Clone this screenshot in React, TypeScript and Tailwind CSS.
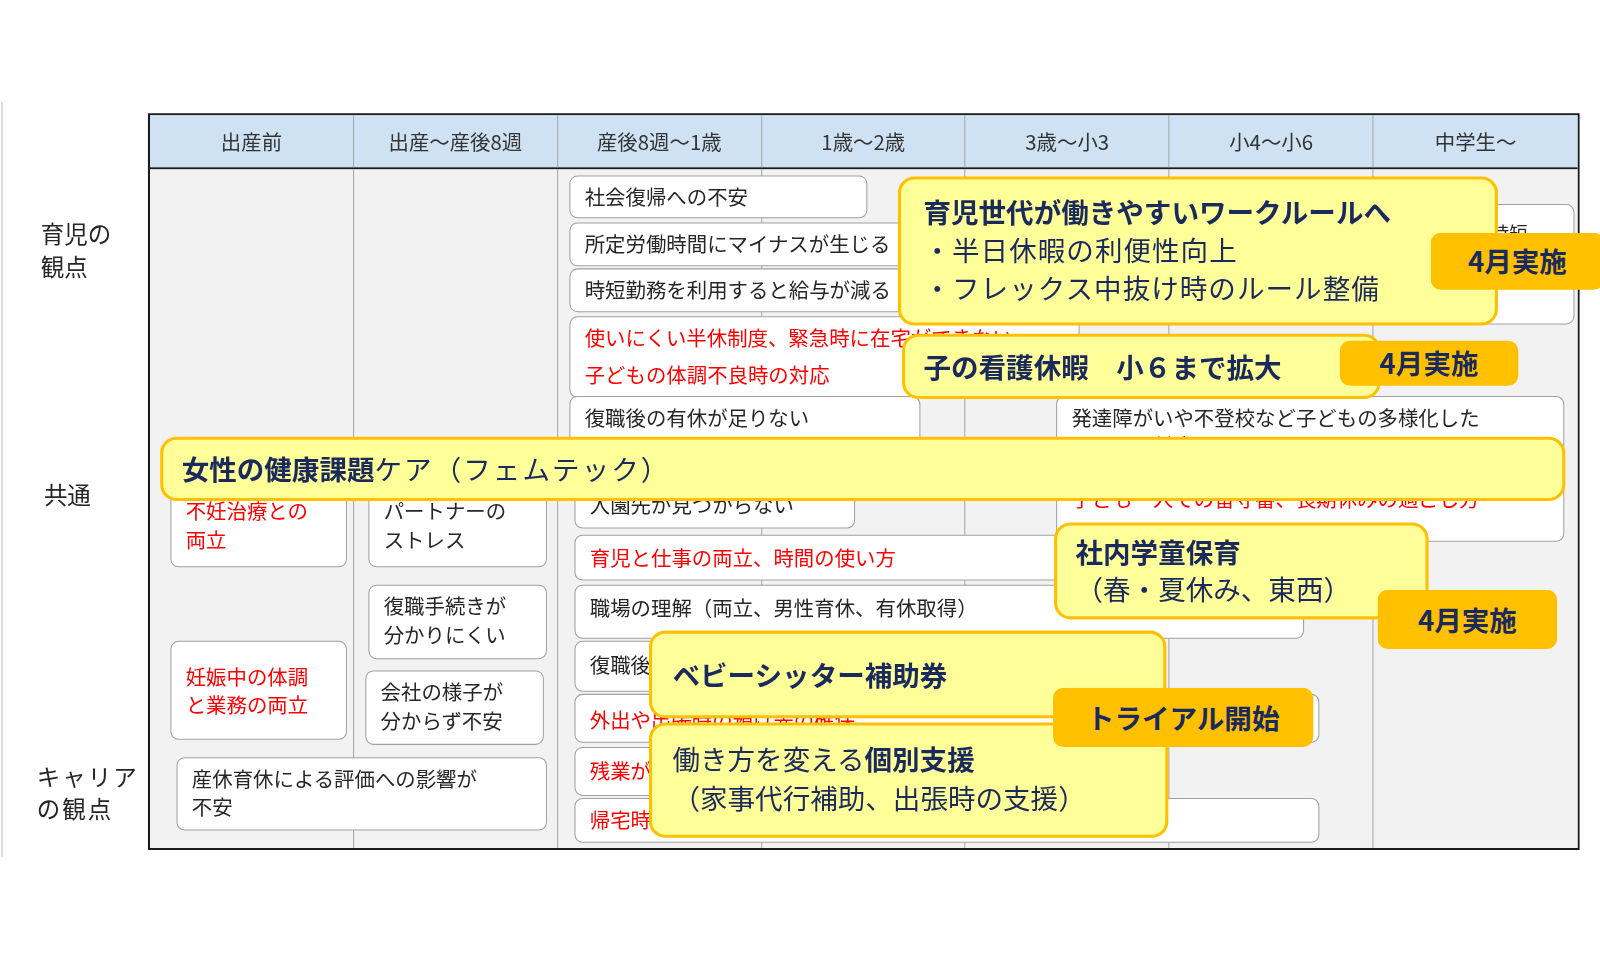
import React from "react";

const F = { fontFamily: '"Noto Sans CJK JP", "Noto Sans", sans-serif' };

type BP = { x: number; y: number; w: number; h: number; red?: boolean; children: React.ReactNode; cls?: string };
function Box({ x, y, w, h, red, children, cls }: BP) {
  return (
    <div
      className={`absolute bg-white border border-[#a0a0a0] rounded-[8px] overflow-hidden px-[14px] text-[20px] leading-[28px] ${red ? "text-[#ff0000]" : "text-[#262626]"} ${cls ?? "pt-[6px]"}`}
      style={{ left: x, top: y, width: w, height: h }}
    >
      {children}
    </div>
  );
}

function Call({ x, y, w, h, children, cls }: BP) {
  return (
    <div
      className={`absolute bg-[#ffff99] border-[3px] border-[#ffc000] rounded-[16px] text-[#1b2a5c] overflow-hidden ${cls ?? ""}`}
      style={{ left: x, top: y, width: w, height: h }}
    >
      {children}
    </div>
  );
}

function Badge({ x, y, w, h, children }: { x: number; y: number; w: number; h: number; children: React.ReactNode }) {
  return (
    <div
      className="absolute bg-[#ffc000] rounded-[10px] flex items-center justify-center text-[#1b2a5c] font-bold text-[27px]"
      style={{ left: x, top: y, width: w, height: h }}
    >
      {children}
    </div>
  );
}

const heads = ["出産前", "出産～産後8週", "産後8週～1歳", "1歳～2歳", "3歳～小3", "小4～小6", "中学生～"];

export default function App() {
  return (
    <div className="w-[1600px] h-[960px] bg-white overflow-hidden" style={F}>
      <div className="relative w-[1568px] h-[941px] scale-[1.0204] origin-top-left">
        <div className="absolute left-[1px] top-[100px] w-[2px] h-[740px] bg-[#dcdcdc]" />
        {/* labels */}
        <div className="absolute left-[40px] top-[212px] text-[23px] leading-[32px] text-[#262626]">育児の<br />観点</div>
        <div className="absolute left-[43px] top-[468px] text-[23px] leading-[32px] text-[#262626]">共通</div>
        <div className="absolute left-[36px] top-[744px] text-[23px] leading-[32px] text-[#262626] tracking-[2px]">キャリア<br />の観点</div>

        {/* table */}
        <div className="absolute left-[145px] top-[111px] w-[1403px] h-[722px] border-2 border-[#1a1a1a] flex flex-col">
          <div className="grid grid-cols-7 h-[53px] bg-[#cfe2f3] border-b-2 border-[#1a1a1a]">
            {heads.map((t, i) => (
              <div key={i} className={`flex items-center justify-center text-[20px] text-[#333] ${i < 6 ? "border-r border-[#a6a6a6]" : ""}`}>{t}</div>
            ))}
          </div>
          <div className="grid grid-cols-7 flex-1 bg-[#f2f2f2]">
            {heads.map((_, i) => (
              <div key={i} className={i < 6 ? "border-r border-[#a6a6a6]" : ""} />
            ))}
          </div>
        </div>

        {/* white boxes */}
        <Box x={1296} y={200} w={247} h={118}><div className="pl-[150px] text-[18px] pt-[6px]">時短</div></Box>
        <Box x={558} y={172} w={292} h={42}>社会復帰への不安</Box>
        <Box x={558} y={218} w={460} h={43}>所定労働時間にマイナスが生じる</Box>
        <Box x={558} y={263} w={460} h={43}>時短勤務を利用すると給与が減る</Box>
        <Box x={558} y={310} w={500} h={80} red>使いにくい半休制度、緊急時に在宅ができない<div className="mt-[8px]">子どもの体調不良時の対応</div></Box>
        <Box x={558} y={388} w={344} h={50}>復職後の有休が足りない</Box>
        <Box x={1035} y={388} w={498} h={143}>
          発達障がいや不登校など子どもの多様化した<br />問題への対応
          <div className="text-[#ff0000] mt-[24px]">子ども一人での留守番、長期休みの過ごし方</div>
        </Box>
        <Box x={563} y={466} w={275} h={52} cls="pt-[14px]">入園先が見つからない</Box>
        <Box x={563} y={524} w={480} h={45} red cls="pt-[8px]">育児と仕事の両立、時間の使い方</Box>
        <Box x={563} y={573} w={715} h={53} cls="pt-[8px]">職場の理解（両立、男性育休、有休取得）</Box>
        <Box x={563} y={628} w={200} h={50} cls="pt-[9px]">復職後のキャリア</Box>
        <Box x={563} y={680} w={730} h={48} red cls="pt-[10px]">外出や出張時の預け先の確保</Box>
        <Box x={563} y={732} w={200} h={48} red cls="pt-[8px]">残業ができない</Box>
        <Box x={563} y={782} w={730} h={44} red cls="pt-[6px]">帰宅時間の制約</Box>

        <Box x={167} y={466} w={173} h={90} red cls="pt-[20px] leading-[28px]">不妊治療との<br />両立</Box>
        <Box x={361} y={466} w={175} h={90} cls="pt-[20px] leading-[28px]">パートナーの<br />ストレス</Box>
        <Box x={361} y={573} w={175} h={73} cls="pt-[6px] leading-[28px]">復職手続きが<br />分かりにくい</Box>
        <Box x={167} y={628} w={173} h={97} red cls="pt-[20px] leading-[28px]">妊娠中の体調<br />と業務の両立</Box>
        <Box x={358} y={657} w={175} h={73} cls="pt-[6px] leading-[28px]">会社の様子が<br />分からず不安</Box>
        <Box x={173} y={742} w={363} h={72} cls="pt-[6px] leading-[28px]">産休育休による評価への影響が<br />不安</Box>

        {/* callouts */}
        <Call x={880} y={173} w={588} h={146} cls="pl-[22px] pt-[14px]">
          <div className="font-bold text-[27px] leading-[36px]">育児世代が働きやすいワークルールへ</div>
          <div className="text-[27px] leading-[37px] tracking-[1px]">・半日休暇の利便性向上</div>
          <div className="text-[27px] leading-[37px] tracking-[1px]">・フレックス中抜け時のルール整備</div>
        </Call>
        <Badge x={1402} y={228} w={170} h={56}>4月実施</Badge>

        <Call x={884} y={327} w={469} h={64} cls="pl-[18px] flex items-center">
          <div className="font-bold text-[27px]">子の看護休暇　小６まで拡大</div>
        </Call>
        <Badge x={1313} y={334} w={175} h={44}>4月実施</Badge>

        <Call x={157} y={428} w={1377} h={63} cls="pl-[18px] flex items-center">
          <div className="text-[27px]"><span className="font-bold">女性の健康課題</span><span className="tracking-[2px]">ケア（フェムテック）</span></div>
        </Call>

        <Call x={1033} y={512} w={367} h={95} cls="pl-[18px] pt-[8px]">
          <div className="font-bold text-[27px] leading-[36px]">社内学童保育</div>
          <div className="text-[27px] leading-[36px]">（春・夏休み、東西）</div>
        </Call>
        <Badge x={1350} y={578} w={176} h={58}>4月実施</Badge>

        <Call x={636} y={618} w={507} h={86} cls="pl-[20px] flex items-center">
          <div className="font-bold text-[27px]">ベビーシッター補助券</div>
        </Call>
        <Call x={636} y={708} w={509} h={113} cls="pl-[20px] pt-[14px]">
          <div className="text-[27px] leading-[38px]">働き方を変える<span className="font-bold">個別支援</span></div>
          <div className="text-[27px] leading-[38px]">（家事代行補助、出張時の支援）</div>
        </Call>
        <Badge x={1032} y={674} w={255} h={58}>トライアル開始</Badge>
      </div>
    </div>
  );
}
